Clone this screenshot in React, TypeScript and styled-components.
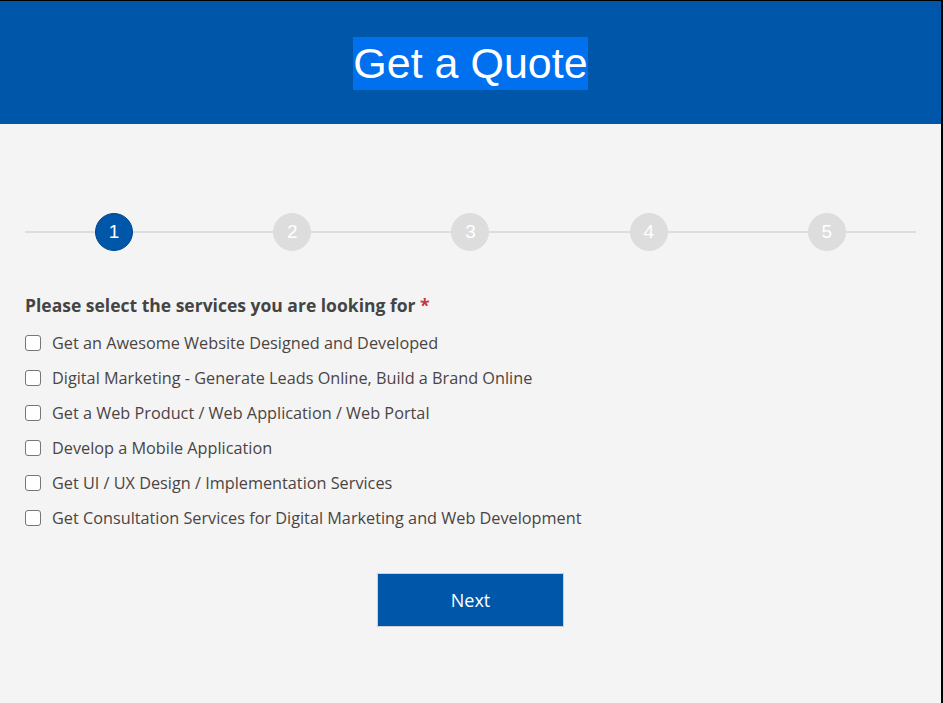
import React from "react";
import styled, { createGlobalStyle } from "styled-components";

const Global = createGlobalStyle`
  html, body { margin: 0; padding: 0; background: #000; }
  body { font-family: "Open Sans", "Liberation Sans", sans-serif; }
  * { box-sizing: border-box; }
`;

const Frame = styled.div`
  margin: 1px 2px 0 0;
  height: 702px;
  background: #f4f4f4;
  display: flex;
  flex-direction: column;
`;

const Header = styled.header`
  background: #0056a8;
  height: 123px;
  display: flex;
  align-items: center;
  justify-content: center;
  padding-top: 2px;
`;

const Title = styled.h1`
  margin: 0;
  font-family: "Liberation Sans", Arial, sans-serif;
  font-weight: 400;
  font-size: 43px;
  line-height: 53px;
  color: #fff;
  background: #0070ee;
  padding: 0 0.5px;
`;

const Body = styled.main`
  padding: 89px 25px 0 25px;
  display: flex;
  flex-direction: column;
`;

const Stepper = styled.div`
  position: relative;
  display: grid;
  grid-template-columns: repeat(5, 1fr);
  height: 38px;
  &::before {
    content: "";
    position: absolute;
    left: 0;
    right: 0;
    top: 18px;
    height: 2px;
    background: #dddddd;
  }
`;

const Step = styled.div<{ $active?: boolean }>`
  position: relative;
  justify-self: center;
  width: 38px;
  height: 38px;
  border-radius: 50%;
  background: ${(p) => (p.$active ? "#0056a8" : "#dddddd")};
  border: 1px solid ${(p) => (p.$active ? "#00478c" : "#dddddd")};
  color: #fff;
  font-family: "Liberation Sans", Arial, sans-serif;
  font-size: 19px;
  display: flex;
  align-items: center;
  justify-content: center;
`;

const Question = styled.h3`
  margin: 42px 0 10px 0;
  font-size: 17.5px;
  font-weight: 700;
  color: #444;
  line-height: 24px;
`;

const Req = styled.span`
  color: #c8363d;
`;

const Options = styled.div`
  display: flex;
  flex-direction: column;
`;

const Option = styled.label`
  display: flex;
  align-items: center;
  height: 35px;
  font-size: 16.25px;
  color: #4b4443;
  gap: 11px;
  padding-bottom: 4px;
`;

const Box = styled.input`
  appearance: none;
  margin: 0;
  width: 16px;
  height: 16px;
  border: 1px solid #767676;
  border-radius: 3px;
  background: #fff;
  flex: none;
`;

const Actions = styled.div`
  display: flex;
  justify-content: center;
  margin-top: 36px;
`;

const Next = styled.button`
  width: 187px;
  height: 54px;
  background: #0056a8;
  border: 1px solid #cfcfcf;
  color: #fff;
  font-family: "Open Sans", "Liberation Sans", sans-serif;
  font-size: 18px;
`;

const services = [
  "Get an Awesome Website Designed and Developed",
  "Digital Marketing - Generate Leads Online, Build a Brand Online",
  "Get a Web Product / Web Application / Web Portal",
  "Develop a Mobile Application",
  "Get UI / UX Design / Implementation Services",
  "Get Consultation Services for Digital Marketing and Web Development",
];

export default function App() {
  return (
    <>
      <Global />
      <Frame>
        <Header>
          <Title>Get a Quote</Title>
        </Header>
        <Body>
          <Stepper>
            {[1, 2, 3, 4, 5].map((n) => (
              <Step key={n} $active={n === 1}>
                {n}
              </Step>
            ))}
          </Stepper>
          <Question>
            Please select the services you are looking for <Req>*</Req>
          </Question>
          <Options>
            {services.map((s) => (
              <Option key={s}>
                <Box type="checkbox" />
                {s}
              </Option>
            ))}
          </Options>
          <Actions>
            <Next>Next</Next>
          </Actions>
        </Body>
      </Frame>
    </>
  );
}
